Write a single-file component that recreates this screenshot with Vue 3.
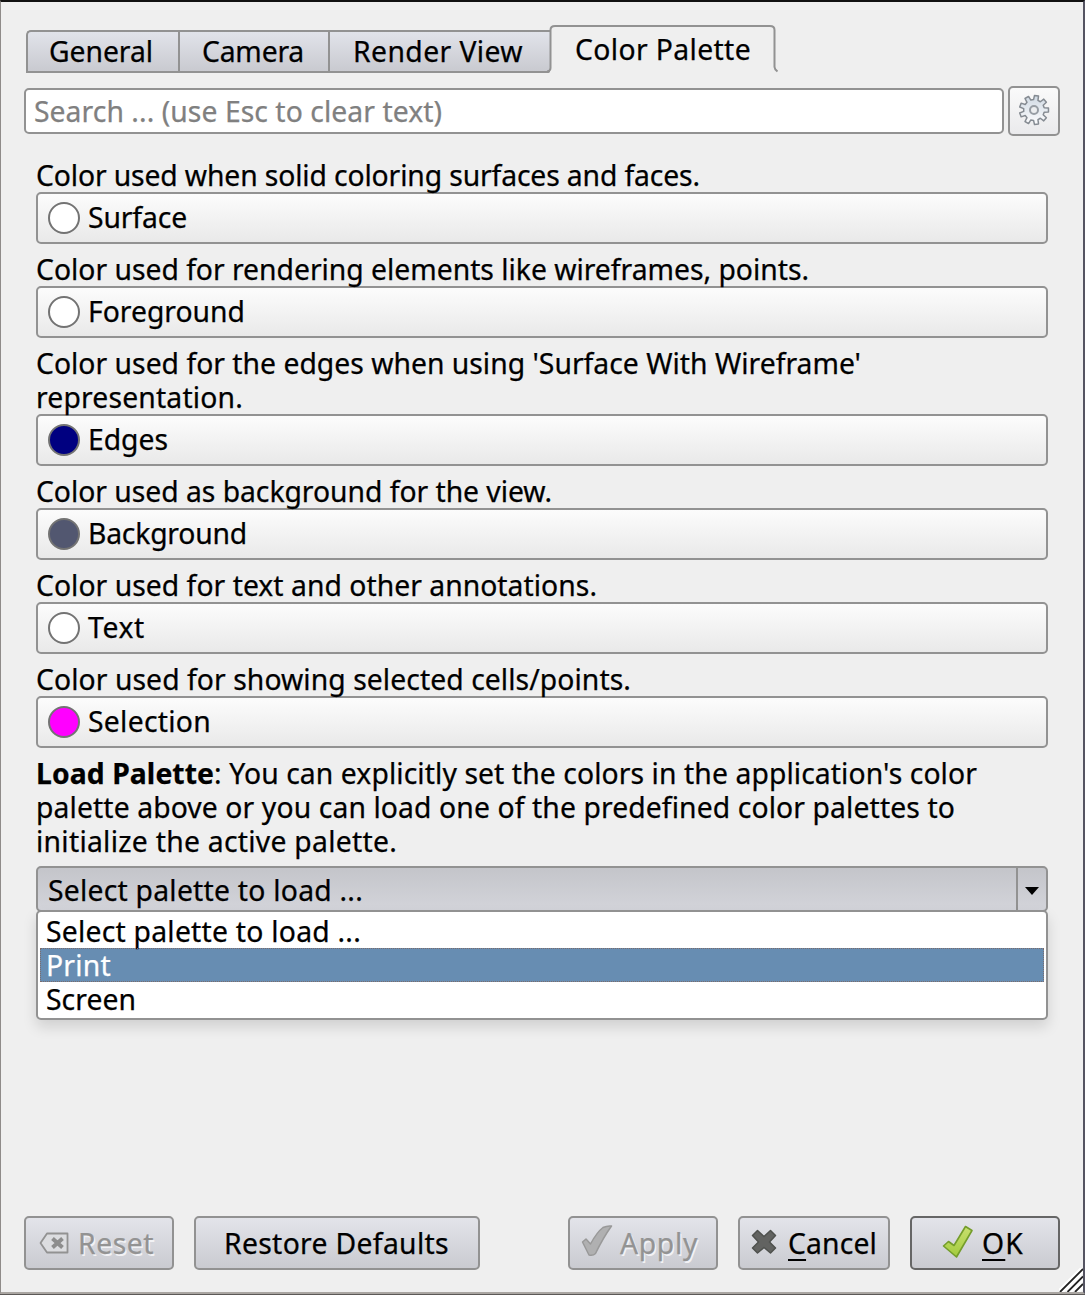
<script setup>
import { ref } from 'vue'

const tabs = [
  { label: 'General', width: 104, cls: 'general' },
  { label: 'Camera', width: 102, cls: 'camera' },
  { label: 'Render View', width: 170, cls: 'render' },
]

const colors = [
  { name: 'Surface', width: 99, swatch: '#ffffff', lines: [['Color used when solid coloring surfaces and faces.', 664]] },
  { name: 'Foreground', width: 157, swatch: '#ffffff', lines: [['Color used for rendering elements like wireframes, points.', 773]] },
  {
    name: 'Edges', width: 80, swatch: '#000080',
    lines: [["Color used for the edges when using 'Surface With Wireframe'", 825], ['representation.', 207]],
  },
  { name: 'Background', width: 159, swatch: '#525770', lines: [['Color used as background for the view.', 516]] },
  { name: 'Text', width: 57, swatch: '#ffffff', lines: [['Color used for text and other annotations.', 561]] },
  { name: 'Selection', width: 123, swatch: '#ff00ff', lines: [['Color used for showing selected cells/points.', 595]] },
]

const palettes = [
  { label: 'Select palette to load ...', width: 315 },
  { label: 'Print', width: 65 },
  { label: 'Screen', width: 90 },
]
const highlighted = ref('Print')

// Outline of a nine-toothed cog around the origin.
function cog(teeth, outer, inner, offset) {
  const step = 360 / teeth
  const points = []
  for (let i = 0; i < teeth; i++) {
    for (const [turn, radius] of [[-0.31, inner], [-0.2, outer], [0.2, outer], [0.31, inner]]) {
      const a = ((offset + (i + turn) * step) * Math.PI) / 180
      points.push(`${(radius * Math.sin(a)).toFixed(2)} ${(-radius * Math.cos(a)).toFixed(2)}`)
    }
  }
  return `M${points.join('L')}Z`
}
const cogPath = cog(9, 14.6, 10.4, 10)

// Tracks a run of text out or in so that it occupies the given width.
const vFit = {
  mounted(el, { value }) {
    const natural = el.getBoundingClientRect().width
    el.style.letterSpacing = `${(value - natural) / el.textContent.length}px`
  },
}
</script>

<template>
  <main class="dialog">
    <nav class="tabs">
      <button v-for="t in tabs" :key="t.label" class="tab" :class="t.cls">
        <span v-fit="t.width">{{ t.label }}</span>
      </button>
      <button class="tab active">
        <svg class="tab-shape" width="232" height="50" viewBox="0 0 232 50">
          <path d="M0 49 L4 46.500 V6 Q4 1.500 8.500 1.500 H223 Q227.500 1.500 227.500 6 V42 Q227.500 44 230.500 46.500 V50 H0Z" fill="#efefef" />
          <path d="M0 46.500 Q3.500 46 3.500 43 V5 Q3.500 1 8 1 H223 Q227.500 1 227.500 5 V42 Q227.500 44 230.500 46.500" fill="none" stroke="#929292" stroke-width="2" />
        </svg>
        <span v-fit="176">Color Palette</span>
      </button>
    </nav>

    <div class="search-row">
      <div class="search"><span v-fit="408">Search ... (use Esc to clear text)</span></div>
      <button class="gear">
        <svg width="34" height="34" viewBox="-17 -17 34 34">
          <defs>
            <linearGradient id="gearFill" x1="0" y1="0" x2="0" y2="1">
              <stop offset="0" stop-color="#cfd9e3" />
              <stop offset="1" stop-color="#fdfdfe" />
            </linearGradient>
          </defs>
          <path :d="cogPath" fill="url(#gearFill)" stroke="#858b92" stroke-width="1.500" stroke-linejoin="round" />
          <circle r="4" fill="#eceef0" stroke="#979da4" stroke-width="2" />
        </svg>
      </button>
    </div>

    <section class="palette">
      <div v-for="c in colors" :key="c.name" class="entry">
        <p v-for="l in c.lines" :key="l[0]" class="line"><span v-fit="l[1]">{{ l[0] }}</span></p>
        <button class="color-button">
          <i class="swatch" :style="{ background: c.swatch }"></i>
          <span v-fit="c.width">{{ c.name }}</span>
        </button>
      </div>

      <div class="load">
        <p class="line"><span v-fit="941"><b>Load Palette</b>: You can explicitly set the colors in the application's color</span></p>
        <p class="line"><span v-fit="919">palette above or you can load one of the predefined color palettes to</span></p>
        <p class="line"><span v-fit="361">initialize the active palette.</span></p>
      </div>

      <div class="combo">
        <div class="combo-value"><span v-fit="315">Select palette to load ...</span></div>
        <div class="combo-arrow">
          <svg width="14" height="8" viewBox="0 0 14 8"><path d="M0 0H14L7 8Z" fill="#000" /></svg>
        </div>
      </div>
      <ul class="options">
        <li v-for="p in palettes" :key="p.label" :class="{ selected: p.label === highlighted }">
          <span v-fit="p.width">{{ p.label }}</span>
        </li>
      </ul>
    </section>

    <footer class="actions">
      <button class="action reset disabled">
        <svg width="30" height="22" viewBox="0 0 30 22">
          <path d="M1.500 11 L8 1.500 H28.500 V20.500 H8Z" fill="#dcdde0" stroke="#929292" stroke-width="1.800" stroke-linejoin="round" />
          <path d="M13.500 6.500 L23.500 15.500 M23.500 6.500 L13.500 15.500" stroke="#8d8d8d" stroke-width="4" />
        </svg>
        <span v-fit="76">Reset</span>
      </button>
      <button class="action restore"><span v-fit="225">Restore Defaults</span></button>
      <button class="action apply disabled">
        <svg width="32" height="34" viewBox="0 0 32 34">
          <path d="M1.500 18 L5 15 L9.500 20 Q16 8 22 3.500 Q26 1.500 30.500 2 Q22 14 14.500 29.500 Q12 32 8 31Z" fill="#b0b0b1" stroke="#999" stroke-width="1.500" stroke-linejoin="round" />
        </svg>
        <span v-fit="78">Apply</span>
      </button>
      <button class="action cancel">
        <svg width="26" height="26" viewBox="0 0 26 26">
          <path d="M6.500 1.500 L13 7.500 L19.500 1.500 L24.500 6.500 L18.500 13 L24.500 19 L19.500 24 L13 18.500 L6.500 24 L1.500 19 L7.500 13 L1.500 6.500Z" fill="#626361" stroke="#4f514e" stroke-width="1.500" stroke-linejoin="round" />
        </svg>
        <span v-fit="89"><span class="key">C</span>ancel</span>
      </button>
      <button class="action ok">
        <svg width="32" height="34" viewBox="0 0 32 34">
          <defs>
            <linearGradient id="okFill" x1="0" y1="0" x2="0" y2="1">
              <stop offset="0" stop-color="#c9e070" />
              <stop offset="1" stop-color="#a3cb3d" />
            </linearGradient>
          </defs>
          <path d="M1.500 21 L6.500 16.500 L12 20.500 L23.500 1.500 L30 5.500 L14.500 32Z" fill="url(#okFill)" stroke="#749d2b" stroke-width="1.600" stroke-linejoin="round" />
        </svg>
        <span v-fit="42"><span class="key">O</span>K</span>
      </button>
    </footer>

    <svg class="grip" width="24" height="24" viewBox="0 0 24 24">
      <path d="M1 24 L24 1 M9 24 L24 9 M17 24 L24 17" stroke="#fff" stroke-width="6" />
      <path d="M1 24 L24 1 M8.500 24 L24 8.500 M16 24 L24 16" stroke="#222" stroke-width="1.800" />
    </svg>
  </main>
</template>

<style>
body {
  margin: 0;
  background: #5c5957;
}
</style>

<style scoped>
* {
  box-sizing: border-box;
}
.dialog {
  position: relative;
  display: flex;
  flex-direction: column;
  width: 1085px;
  height: 1294px;
  padding: 23px 23px 0 23px;
  border-top: 2px solid #111;
  border-left: 1px solid #8f8b89;
  border-right: 2px solid #555462;
  border-bottom: 2px solid #aaa6a2;
  background: #efefef;
  color: #000;
  font: 28.3px/34px "Noto Sans", sans-serif;
  -webkit-text-stroke: 0.25px;
  white-space: nowrap;
}
button {
  margin: 0;
  padding: 0;
  font: inherit;
  color: inherit;
}
.tabs {
  display: flex;
  align-items: flex-end;
  height: 48px;
  padding-left: 2px;
}
.tab {
  height: 43px;
  border: 2px solid #929292;
  border-right: 0;
  background: linear-gradient(#e1e3ea, #c9cad0);
  text-align: left;
}
.tab:not(.active) {
  padding-bottom: 2px;
}
.general {
  width: 152px;
  padding-left: 21px;
  border-top-left-radius: 5px;
}
.camera {
  width: 150px;
  padding-left: 22px;
}
.render {
  width: 222px;
  padding-left: 23px;
}
.tab.active {
  position: relative;
  width: 228px;
  height: 48px;
  padding: 0 0 1px 25px;
  border: 0;
  background: none;
}
.tab-shape {
  position: absolute;
  left: -3px;
  top: 0;
}
.tab.active span {
  position: relative;
}
.search-row {
  display: flex;
  align-items: center;
  gap: 4px;
  height: 50px;
  margin-top: 13px;
}
.search {
  width: 980px;
  height: 46px;
  padding: 4px 0 0 8px;
  border: 2px solid #929292;
  border-radius: 5px;
  background: #fff;
  color: #808080;
}
.gear {
  display: flex;
  align-items: center;
  justify-content: center;
  width: 52px;
  height: 50px;
  padding: 0 1px 2px 0;
  border: 2px solid #929292;
  border-radius: 5px;
  background: linear-gradient(#fafafa, #eaeaec);
}
.palette {
  display: flex;
  flex-direction: column;
  width: 1012px;
  margin: 22px 0 0 12px;
}
.entry {
  margin-bottom: 8px;
}
.line {
  height: 34px;
  margin: 0;
}
.color-button {
  display: flex;
  align-items: center;
  width: 100%;
  height: 52px;
  padding: 0 0 0 10px;
  border: 2px solid #929292;
  border-radius: 5px;
  background: linear-gradient(#fcfcfc, #e9e9e9);
}
.color-button span {
  padding-bottom: 2px;
}
.swatch {
  width: 32px;
  height: 32px;
  margin-right: 8px;
  border: 2px solid #737373;
  border-radius: 50%;
}
.combo {
  display: flex;
  height: 46px;
  margin-top: 8px;
  border: 2px solid #929292;
  border-radius: 5px;
  background: linear-gradient(#c4c5ca, #d3d4da);
}
.combo-value {
  flex: 1;
  padding: 5px 0 0 10px;
}
.combo-arrow {
  display: flex;
  align-items: center;
  justify-content: center;
  width: 30px;
  padding-top: 4px;
  border-left: 2px solid #929292;
}
.options {
  height: 110px;
  margin: -2px 0 0;
  padding: 2px 2px 0;
  border: 2px solid #929292;
  border-radius: 5px;
  background: #fff;
  box-shadow: 0 7px 14px rgba(0, 0, 0, 0.13);
  list-style: none;
}
.options li {
  height: 34px;
  padding-left: 6px;
}
.options .selected {
  background: #678db2;
  color: #fff;
  outline: 1px dotted #7d6c6b;
  outline-offset: -1px;
}
.actions {
  display: flex;
  gap: 20px;
  margin: auto 0 22px;
}
.action {
  display: flex;
  align-items: center;
  height: 54px;
  border: 2px solid #929292;
  border-radius: 5px;
  background: linear-gradient(#e3e4ea, #cacbd1);
}
.action > span {
  padding-bottom: 1px;
}
.disabled {
  color: #939393;
  text-shadow: 1.500px 1.500px 0 #f2f2f5;
}
.reset {
  width: 150px;
  padding-left: 13px;
}
.reset svg {
  margin-right: 9px;
}
.restore {
  width: 286px;
  padding-left: 28px;
}
.apply {
  width: 150px;
  margin-left: auto;
  padding-left: 11px;
}
.apply svg {
  margin: -4px 7px 0 0;
}
.cancel {
  width: 152px;
  padding-left: 11px;
}
.cancel svg {
  margin: -2px 11px 0 0;
}
.ok {
  width: 150px;
  padding-left: 30px;
  border-color: #666;
}
.ok svg {
  margin: -3px 8px 0 0;
}
.key {
  text-decoration: underline;
  text-decoration-thickness: 2px;
  text-underline-offset: 5px;
}
.grip {
  position: absolute;
  right: 0;
  bottom: 0;
}
</style>
